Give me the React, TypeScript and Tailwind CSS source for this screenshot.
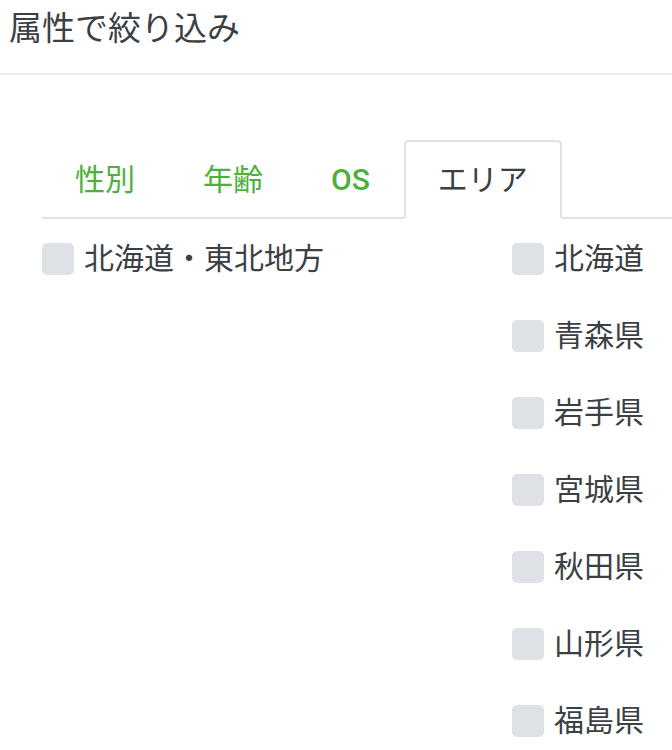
import React from "react";

const prefectures = ["北海道", "青森県", "岩手県", "宮城県", "秋田県", "山形県", "福島県"];

function Box() {
  return <span className="block w-[32px] h-[32px] shrink-0 rounded-[5px] bg-[#dee2e6]" />;
}

function Row({ label }: { label: string }) {
  return (
    <label className="flex items-center gap-[10px] h-[45px]">
      <Box />
      <span className="text-[30px] leading-[45px] text-[#3b4045] whitespace-nowrap">{label}</span>
    </label>
  );
}

export default function App() {
  const tabs = ["性別", "年齢", "OS"];
  return (
    <div className="w-[672px] h-[750px] overflow-hidden bg-white font-['Roboto','Noto_Sans_CJK_JP',sans-serif]">
      <div className="h-[75px] border-b-[2px] border-[#eeeeee] pl-[9px]">
        <h1 className="text-[33px] leading-[58px] text-[#3b4045] font-normal">属性で絞り込み</h1>
      </div>
      <div className="pl-[42px] pt-[65px]">
        <div className="flex border-b-[2px] border-[#dee2e6]">
          {tabs.map((t, i) => (
            <div
              key={t}
              className={
                i === 0
                  ? "h-[79px] -mb-[2px] pl-[31px] pr-[32px] border-[2px] border-transparent flex items-center text-[30px] leading-[36px] text-[#4bb13a] font-normal"
                  : "h-[79px] -mb-[2px] px-[32px] border-[2px] border-transparent flex items-center text-[30px] leading-[36px] text-[#4bb13a] font-normal"
              }
            >
              {t === "OS" ? <span className="font-medium">{t}</span> : t}
            </div>
          ))}
          <div className="h-[79px] -mb-[2px] px-[32px] border-[2px] border-[#dee2e6] border-b-white bg-white rounded-t-[5px] flex items-center text-[30px] leading-[36px] text-[#3b4045]">
            エリア
          </div>
        </div>
        <div className="flex pt-[17px]">
          <div className="w-[470px] shrink-0">
            <Row label="北海道・東北地方" />
          </div>
          <div className="flex flex-col gap-[32px]">
            {prefectures.map((p) => (
              <Row key={p} label={p} />
            ))}
          </div>
        </div>
      </div>
    </div>
  );
}
